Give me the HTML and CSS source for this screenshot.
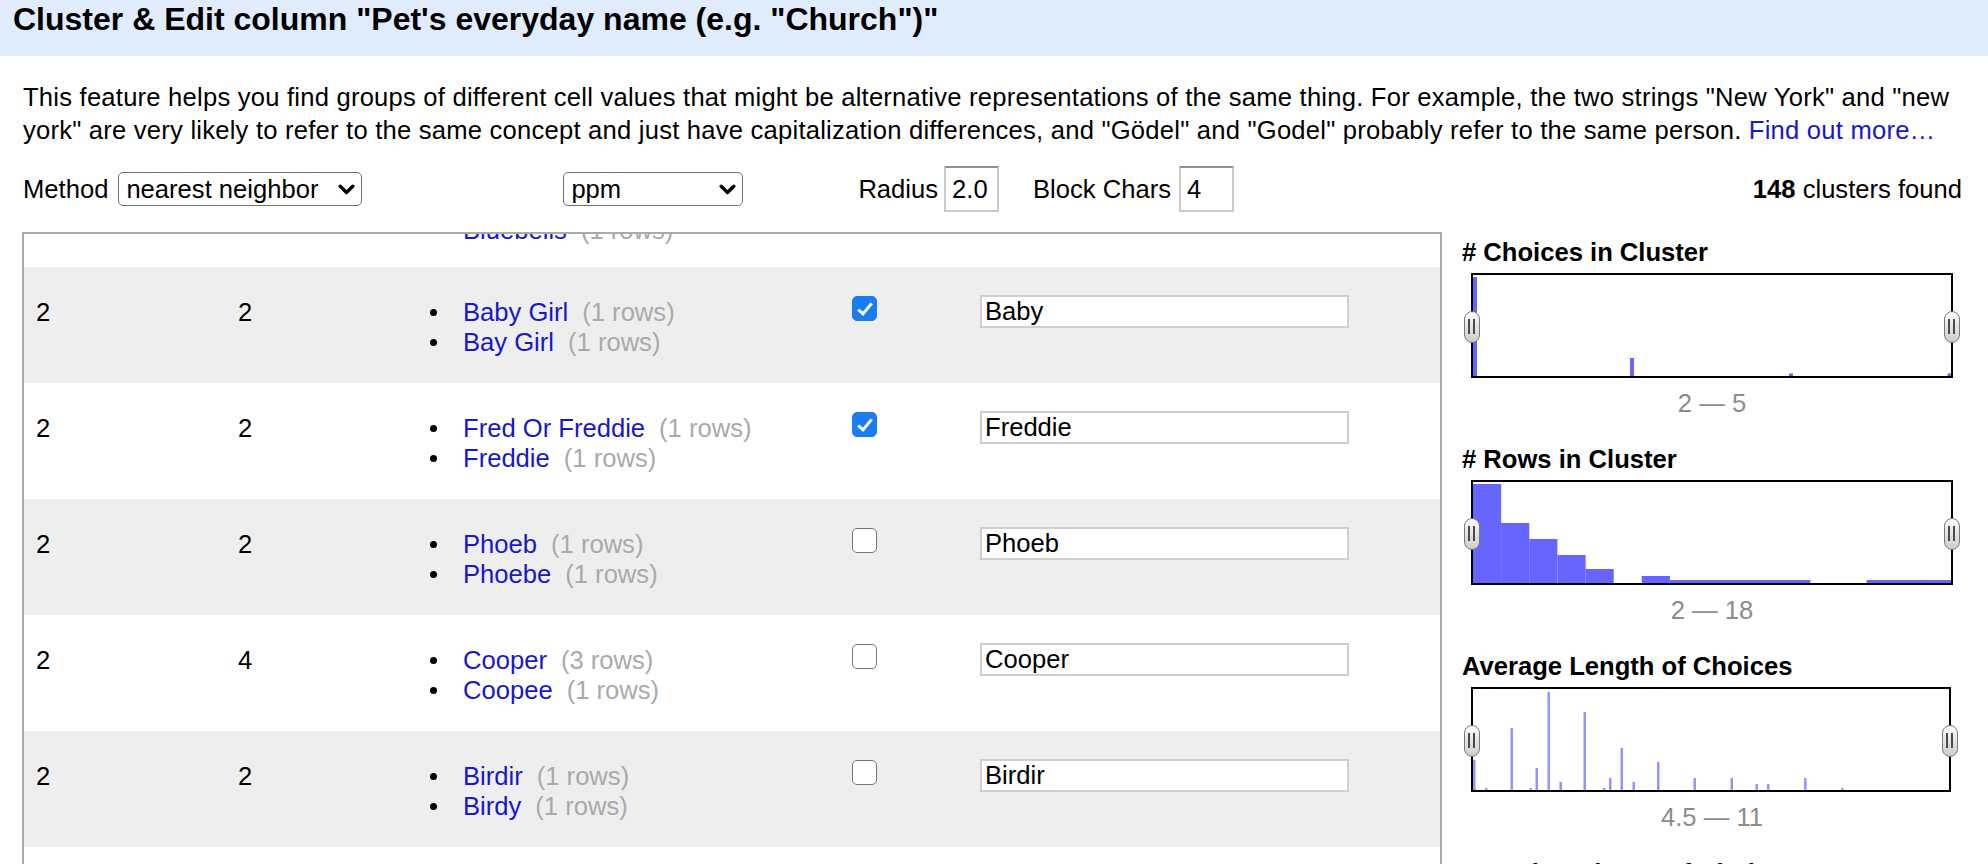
FILE: index.html
```html
<!DOCTYPE html>
<html lang="en">
<head>
<meta charset="utf-8">
<title>Cluster &amp; Edit</title>
<link rel="stylesheet" href="styles.css">
</head>
<body>
<div class="dialog">
  <div class="dialog-header">Cluster &amp; Edit column "Pet's everyday name (e.g. "Church")"</div>
  <div class="dialog-body">
    <p class="intro">This feature helps you find groups of different cell values that might be alternative representations of the same thing. For example, the two strings "New York" and "new york" are very likely to refer to the same concept and just have capitalization differences, and "Gödel" and "Godel" probably refer to the same person. <a href="#">Find out more…</a></p>

    <div class="controls">
      <span class="ctl-label method-label">Method</span>
      <span class="select-wrap method-select">
        <select><option>nearest neighbor</option><option>key collision</option></select>
        <svg class="chev" viewBox="0 0 17 11"><path d="M2.2 2.2 L8.5 8.5 L14.8 2.2" fill="none" stroke="#000" stroke-width="3.4" stroke-linecap="round" stroke-linejoin="round"/></svg>
      </span>
      <span class="select-wrap sim-select">
        <select><option>ppm</option><option>levenshtein</option></select>
        <svg class="chev" viewBox="0 0 17 11"><path d="M2.2 2.2 L8.5 8.5 L14.8 2.2" fill="none" stroke="#000" stroke-width="3.4" stroke-linecap="round" stroke-linejoin="round"/></svg>
      </span>
      <span class="ctl-label radius-label">Radius</span>
      <input class="num-input radius-input" type="text" value="2.0">
      <span class="ctl-label block-label">Block Chars</span>
      <input class="num-input block-input" type="text" value="4">
      <span class="cluster-count"><b>148</b> clusters found</span>
    </div>

    <div class="main">
      <div class="table-frame">
        <table class="clusters">
          <colgroup>
            <col class="c-size"><col class="c-rows"><col class="c-values"><col class="c-merge"><col class="c-new">
          </colgroup>
          <tbody>
            <tr class="scrolled-off">
              <td>2</td><td>2</td>
              <td class="values"><ul><li><a href="#">Bluebell</a><span class="count">(1 rows)</span></li><li><a href="#">Bluebells</a><span class="count">(1 rows)</span></li></ul></td>
              <td><input class="pick" type="checkbox"></td>
              <td><input class="choice-input" type="text" value="Bluebell"></td>
            </tr>
            <tr>
              <td>2</td><td>2</td>
              <td class="values"><ul><li><a href="#">Baby Girl</a><span class="count">(1 rows)</span></li><li><a href="#">Bay Girl</a><span class="count">(1 rows)</span></li></ul></td>
              <td><input class="pick" type="checkbox" checked></td>
              <td><input class="choice-input" type="text" value="Baby"></td>
            </tr>
            <tr>
              <td>2</td><td>2</td>
              <td class="values"><ul><li><a href="#">Fred Or Freddie</a><span class="count">(1 rows)</span></li><li><a href="#">Freddie</a><span class="count">(1 rows)</span></li></ul></td>
              <td><input class="pick" type="checkbox" checked></td>
              <td><input class="choice-input" type="text" value="Freddie"></td>
            </tr>
            <tr>
              <td>2</td><td>2</td>
              <td class="values"><ul><li><a href="#">Phoeb</a><span class="count">(1 rows)</span></li><li><a href="#">Phoebe</a><span class="count">(1 rows)</span></li></ul></td>
              <td><input class="pick" type="checkbox"></td>
              <td><input class="choice-input" type="text" value="Phoeb"></td>
            </tr>
            <tr>
              <td>2</td><td>4</td>
              <td class="values"><ul><li><a href="#">Cooper</a><span class="count">(3 rows)</span></li><li><a href="#">Coopee</a><span class="count">(1 rows)</span></li></ul></td>
              <td><input class="pick" type="checkbox"></td>
              <td><input class="choice-input" type="text" value="Cooper"></td>
            </tr>
            <tr>
              <td>2</td><td>2</td>
              <td class="values"><ul><li><a href="#">Birdir</a><span class="count">(1 rows)</span></li><li><a href="#">Birdy</a><span class="count">(1 rows)</span></li></ul></td>
              <td><input class="pick" type="checkbox"></td>
              <td><input class="choice-input" type="text" value="Birdir"></td>
            </tr>
            <tr>
              <td>2</td><td>2</td>
              <td class="values"><ul><li><a href="#">Ginger</a><span class="count">(1 rows)</span></li><li><a href="#">Gingers</a><span class="count">(1 rows)</span></li></ul></td>
              <td><input class="pick" type="checkbox"></td>
              <td><input class="choice-input" type="text" value="Ginger"></td>
            </tr>
          </tbody>
        </table>
      </div>

      <div class="facets">
        <div class="facet">
          <h3># Choices in Cluster</h3>
          <div class="hist">
            <svg viewBox="0 0 478 101">
              <rect class="bar" x="0" y="2" width="4" height="99"/>
              <rect class="bar" x="157" y="83" width="4" height="18"/>
              <rect class="bar" x="316" y="98.5" width="4" height="2.5"/>
              <rect class="bar" x="474.5" y="98.5" width="3.5" height="2.5"/>
            </svg>
            <span class="handle left"></span><span class="handle right"></span>
          </div>
          <div class="hist-range">2 — 5</div>
        </div>

        <div class="facet">
          <h3># Rows in Cluster</h3>
          <div class="hist">
            <svg viewBox="0 0 478 101">
              <rect class="bar" x="0" y="2" width="28.2" height="99"/>
              <rect class="bar" x="28.1" y="41" width="28.2" height="60"/>
              <rect class="bar" x="56.2" y="57" width="28.2" height="44"/>
              <rect class="bar" x="84.4" y="73" width="28.2" height="28"/>
              <rect class="bar" x="112.5" y="87" width="28.2" height="14"/>
              <rect class="bar" x="168.7" y="94" width="28.2" height="7"/>
              <rect class="bar" x="196.8" y="98" width="140.6" height="3"/>
              <rect class="bar" x="393.6" y="98" width="84.4" height="3"/>
            </svg>
            <span class="handle left"></span><span class="handle right"></span>
          </div>
          <div class="hist-range">2 — 18</div>
        </div>

        <div class="facet">
          <h3>Average Length of Choices</h3>
          <div class="hist hist-narrow">
            <svg viewBox="0 0 476 101">
              <rect class="thin" x="0" y="71" width="2.5" height="30"/>
              <rect class="thin" x="12" y="99" width="2.5" height="2"/>
              <rect class="thin" x="37.5" y="39" width="2.5" height="62"/>
              <rect class="thin" x="56.5" y="99" width="2.5" height="2"/>
              <rect class="thin" x="62.5" y="79" width="2.5" height="22"/>
              <rect class="thin" x="74.5" y="3" width="2.5" height="98"/>
              <rect class="thin" x="86.5" y="93" width="2.5" height="8"/>
              <rect class="thin" x="110.5" y="23" width="2.5" height="78"/>
              <rect class="thin" x="130" y="99" width="2.5" height="2"/>
              <rect class="thin" x="136" y="89" width="2.5" height="12"/>
              <rect class="thin" x="147.5" y="59" width="2.5" height="42"/>
              <rect class="thin" x="159.5" y="93" width="2.5" height="8"/>
              <rect class="thin" x="184" y="73" width="2.5" height="28"/>
              <rect class="thin" x="220.5" y="89" width="2.5" height="12"/>
              <rect class="thin" x="257.5" y="89" width="2.5" height="12"/>
              <rect class="thin" x="282.5" y="95" width="2.5" height="6"/>
              <rect class="thin" x="294" y="95" width="2.5" height="6"/>
              <rect class="thin" x="331" y="89" width="2.5" height="12"/>
              <rect class="thin" x="368" y="99" width="2.5" height="2"/>
            </svg>
            <span class="handle left"></span><span class="handle right"></span>
          </div>
          <div class="hist-range">4.5 — 11</div>
        </div>

        <div class="facet">
          <h3>Length Variance of Choices</h3>
          <div class="hist">
            <svg viewBox="0 0 478 101">
              <rect class="bar" x="0" y="10" width="6" height="91"/>
            </svg>
            <span class="handle left"></span><span class="handle right"></span>
          </div>
          <div class="hist-range">0 — 4</div>
        </div>
      </div>
    </div>
  </div>
</div>
</body>
</html>
```

FILE: styles.css
```css
html, body {
  margin: 0;
  height: 100%;
  overflow: hidden;
  background: #fff;
}

body {
  font-family: "Liberation Sans", Arial, Helvetica, sans-serif;
  font-size: 25.6px;
  color: #000;
}

.dialog-header {
  height: 56px;
  box-sizing: border-box;
  padding: 3px 13px 0;
  background: #e0ebfc;
  font-size: 32px;
  font-weight: bold;
  line-height: 32px;
  white-space: nowrap;
}

.dialog-body {
  padding: 0 12px 0 22px;
}

.intro {
  margin: 25px 0 0 1px;
  line-height: 33px;
  letter-spacing: 0.22px;
}

.intro a {
  color: #1717cc;
  text-decoration: none;
}

/* controls row */
.controls {
  display: flex;
  align-items: center;
  height: 46px;
  margin-top: 19px;
  padding-right: 14px;
  white-space: nowrap;
}

.method-label {
  margin-left: 1px;
}

.select-wrap {
  position: relative;
  display: block;
  flex: none;
}

.select-wrap select {
  -webkit-appearance: none;
  appearance: none;
  display: block;
  width: 100%;
  height: 34px;
  margin: 0;
  box-sizing: border-box;
  border: 1.5px solid #6f6f6f;
  border-radius: 5px;
  background: #fff;
  color: #000;
  font-family: inherit;
  font-size: 25.6px;
  padding: 0 30px 0 7px;
}

.chev {
  position: absolute;
  right: 7px;
  top: 50%;
  width: 17px;
  height: 11px;
  margin-top: -5px;
  pointer-events: none;
}

.method-select {
  width: 244px;
  margin-left: 10px;
}

.sim-select {
  width: 180px;
  margin-left: 201px;
}

.radius-label {
  margin-left: 115px;
}

.block-label {
  margin-left: 34px;
}

.num-input {
  width: 55px;
  height: 46px;
  box-sizing: border-box;
  margin: 0;
  border: 2px solid #cbcbcb;
  border-top-color: #8f8f8f;
  padding: 0 6px;
  font-family: inherit;
  font-size: 25.6px;
  color: #000;
  background: #fff;
}

.radius-input {
  margin-left: 6px;
}

.block-input {
  margin-left: 8px;
}

.cluster-count {
  margin-left: auto;
}

/* main area */
.main {
  display: flex;
  align-items: flex-start;
  margin-top: 20px;
}

.table-frame {
  flex: none;
  width: 1420px;
  height: 650px;
  box-sizing: border-box;
  border: 2px solid #ababab;
  overflow: hidden;
}

.clusters {
  width: 100%;
  table-layout: fixed;
  border-collapse: collapse;
  margin-top: -83px;
}

.c-size { width: 202px; }
.c-rows { width: 196px; }
.c-values { width: 418px; }
.c-merge { width: 128px; }
.c-new { width: 472px; }

.clusters td {
  padding: 30px 12px 26px;
  vertical-align: top;
  line-height: 30px;
}

.clusters tr.scrolled-off td {
  padding-top: 34px;
  padding-bottom: 22px;
}

.clusters tr:nth-child(even) {
  background: #eeeeee;
}

.clusters td.values {
  padding-left: 8px;
}

.values ul {
  margin: 0;
  padding: 0;
  list-style: none;
}

.values li {
  display: flex;
  align-items: center;
  white-space: nowrap;
}

.values li::before {
  content: "";
  flex: none;
  width: 7px;
  height: 7px;
  border-radius: 50%;
  background: #000;
  margin-right: 26px;
}

.values a {
  color: #1717cc;
  text-decoration: none;
}

.values .count {
  color: #aaaaaa;
  margin-left: 14px;
}

.pick {
  -webkit-appearance: none;
  appearance: none;
  display: block;
  position: relative;
  width: 25px;
  height: 25px;
  margin: -1px 0 0 0;
  box-sizing: border-box;
  border: 1.5px solid #767676;
  border-radius: 5px;
  background: #fff;
}

.pick:checked {
  background: #1b7cf2;
  border-color: #1b7cf2;
}

.pick:checked::after {
  content: "";
  position: absolute;
  left: 7.5px;
  top: 2.5px;
  width: 5px;
  height: 12px;
  border: solid #fff;
  border-width: 0 3.5px 3.5px 0;
  transform: rotate(40deg);
}

.choice-input {
  display: block;
  width: 369px;
  height: 33px;
  box-sizing: border-box;
  margin: -2px 0 0 0;
  border: 2px solid #cfcfcf;
  padding: 0 3px;
  font-family: inherit;
  font-size: 25.6px;
  color: #000;
  background: #fff;
}

/* facets */
.facets {
  flex: none;
  width: 506px;
  margin-left: 20px;
  padding-top: 5px;
}

.facet {
  margin-bottom: 26px;
}

.facet h3 {
  margin: 0;
  font-size: 25.6px;
  line-height: 30px;
  font-weight: bold;
  white-space: nowrap;
}

.hist {
  position: relative;
  width: 482px;
  height: 105px;
  box-sizing: border-box;
  border: 2px solid #000;
  margin: 6px 0 0 9px;
}

.hist-narrow {
  width: 480px;
}

.hist svg {
  display: block;
  width: 100%;
  height: 101px;
}

.bar {
  fill: #6666ff;
}

.thin {
  fill: #9494ff;
}

.handle {
  position: absolute;
  top: 50%;
  width: 16px;
  height: 32px;
  margin-top: -15px;
  box-sizing: border-box;
  border: 1.5px solid #7a7a7a;
  border-radius: 8px;
  background: linear-gradient(#fbfbfb, #cdcdcd);
}

.handle::before {
  content: "";
  position: absolute;
  left: 3px;
  top: 7px;
  width: 3px;
  height: 15px;
  border-left: 2px solid #4a4a4a;
  border-right: 2px solid #4a4a4a;
}

.handle.left {
  left: -9px;
}

.handle.right {
  right: -9px;
}

.hist-range {
  width: 482px;
  margin: 10px 0 0 9px;
  text-align: center;
  color: #8c8c8c;
  line-height: 30px;
}
```
